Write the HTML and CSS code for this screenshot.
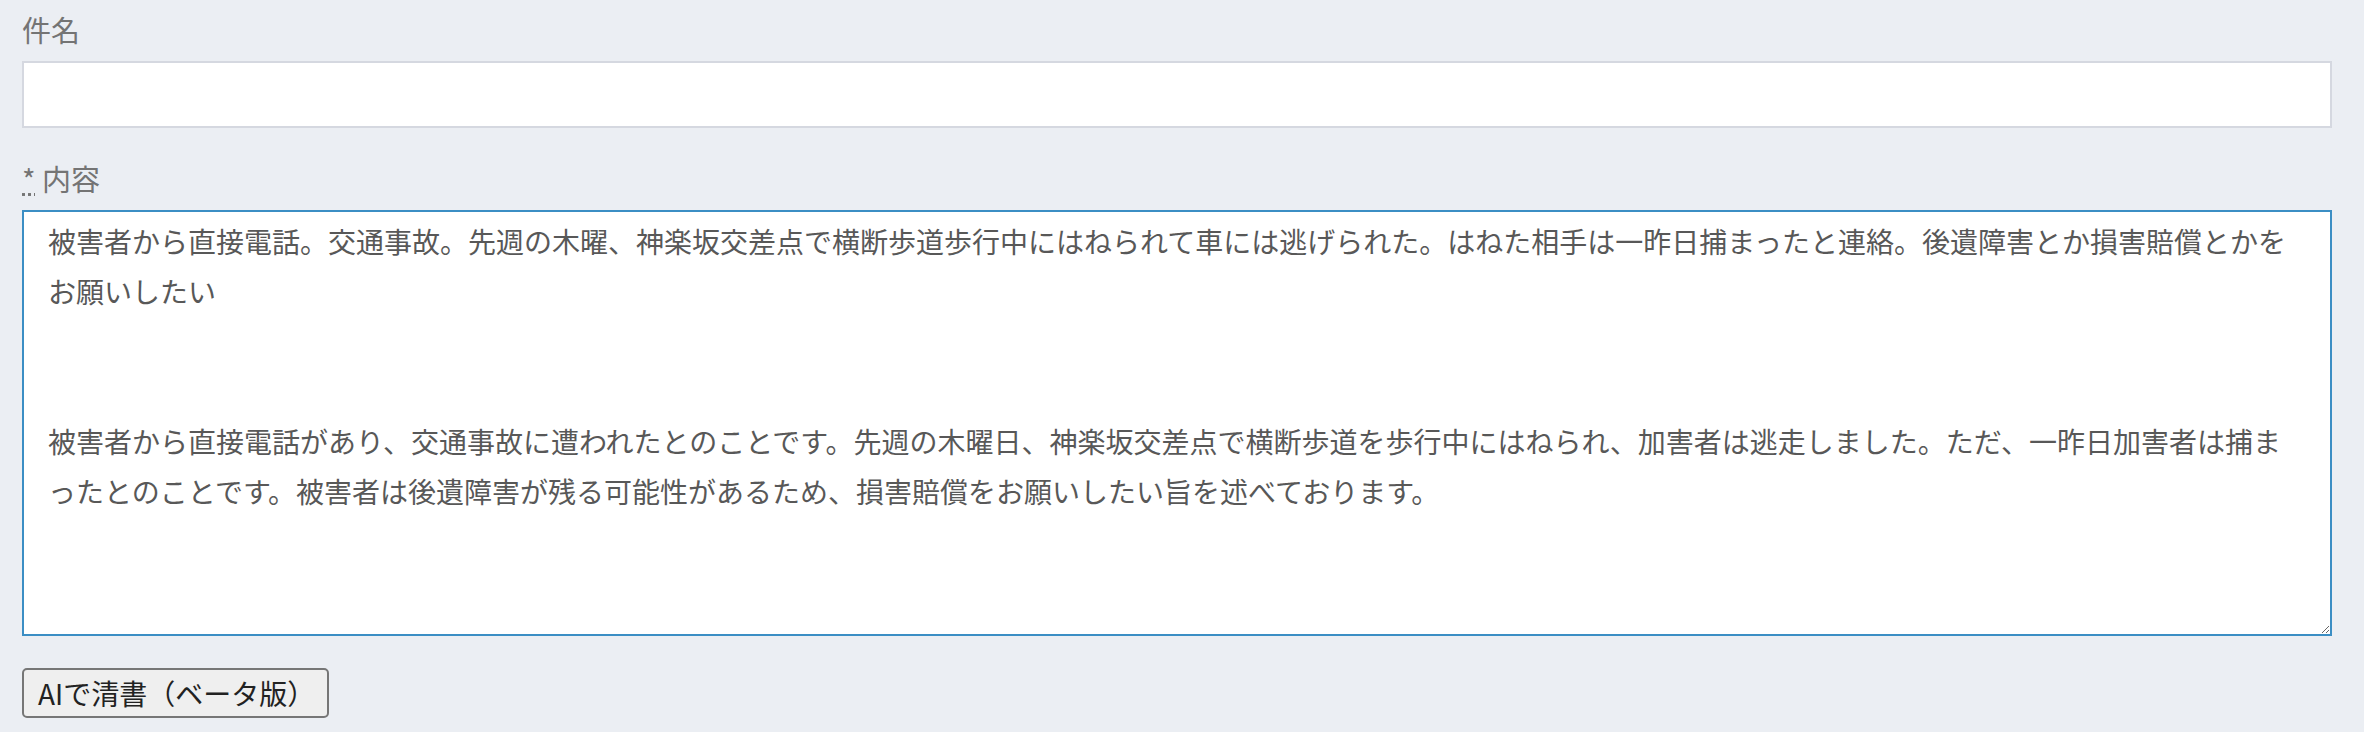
FILE: index.html
```html
<!DOCTYPE html>
<html lang="ja">

<head>
    <meta charset="UTF-8" />
    <meta name="viewport" content="width=device-width, initial-scale=1.0" />
    <title>問い合わせ</title>

    <link rel="stylesheet" href="styles.css">
</head>

<body>
    <form class="inquiry-form">
        <div class="field">
            <label class="field-label" for="subject">件名</label>
            <input class="text-input" type="text" id="subject" name="subject" value="" />
        </div>

        <div class="field field-body">
            <label class="field-label" for="body"><abbr title="必須">*</abbr> 内容</label>
            <textarea class="text-area" id="body" name="body">
被害者から直接電話。交通事故。先週の木曜、神楽坂交差点で横断歩道歩行中にはねられて車には逃げられた。はねた相手は一昨日捕まったと連絡。後遺障害とか損害賠償とかをお願いしたい


被害者から直接電話があり、交通事故に遭われたとのことです。先週の木曜日、神楽坂交差点で横断歩道を歩行中にはねられ、加害者は逃走しました。ただ、一昨日加害者は捕まったとのことです。被害者は後遺障害が残る可能性があるため、損害賠償をお願いしたい旨を述べております。</textarea>
        </div>

        <button class="ai-button" type="button">AIで清書（ベータ版）</button>
    </form>
</body>

</html>
```

FILE: styles.css
```css
body {
    margin: 0;
    padding: 9px 32px 0 22px;
    background-color: #ebeef3;
    font-family: "Noto Sans CJK JP", "Noto Sans", sans-serif;
}

.inquiry-form {
    width: 2310px;
}

.field-label {
    display: block;
    font-size: 29px;
    line-height: 40px;
    color: #747474;
    margin-bottom: 12px;
}

.field-label abbr {
    text-decoration: underline dotted;
}

.field-body {
    margin-top: 30px;
}

.text-input {
    display: block;
    box-sizing: border-box;
    width: 100%;
    height: 67px;
    border: 2px solid #d5d8e0;
    background: #fff;
    font-family: inherit;
    font-size: 28px;
}

.text-area {
    display: block;
    box-sizing: border-box;
    width: 100%;
    height: 426px;
    padding: 4px 24px;
    border: 2px solid #3b8ec4;
    background: #fff;
    outline: none;
    font-family: inherit;
    font-size: 28px;
    line-height: 50px;
    color: #585858;
}

.ai-button {
    display: block;
    margin-top: 32px;
    height: 50px;
    padding: 0 12px 0 14px;
    border: 2px solid #767676;
    border-radius: 5px;
    background: #efefef;
    font-family: inherit;
    font-size: 28px;
    color: #222;
}
```
